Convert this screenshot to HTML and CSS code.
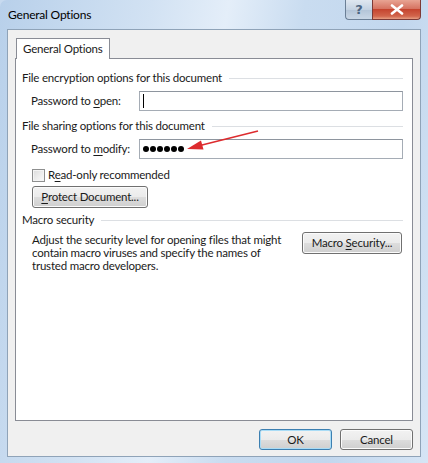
FILE: index.html
```html
<!DOCTYPE html>
<html lang="en">
<head>
    <meta charset="UTF-8">
    <title>General Options</title>
    <link rel="stylesheet" href="styles.css">
</head>
<body>
    <div class="window">
        <div class="titlebar">
            <span class="title">General Options</span>
            <div class="controls">
                <span class="ctl help">?</span>
                <span class="ctl close">
                    <svg width="14" height="11" viewBox="0 0 14 11"><path d="M2 1.5 L12 9.5 M12 1.5 L2 9.5" stroke="#fff" stroke-width="2.6" stroke-linecap="round"/></svg>
                </span>
            </div>
        </div>
        <div class="client">
            <div class="tabs">
                <div class="tab">General Options</div>
            </div>
            <div class="panel">
                <div class="group-title"><span>File encryption options for this document</span><i></i></div>
                <div class="row">
                    <label class="label">Password to <u>o</u>pen:</label>
                    <div class="field"><span class="caret"></span></div>
                </div>
                <div class="group-title g2"><span>File sharing options for this document</span><i></i></div>
                <div class="row">
                    <label class="label">Password to <u>m</u>odify:</label>
                    <div class="field dots"><b></b><b></b><b></b><b></b><b></b><b></b></div>
                </div>
                <div class="check-row">
                    <span class="checkbox"></span>
                    <span>R<u>e</u>ad-only recommended</span>
                </div>
                <button class="btn protect"><u>P</u>rotect Document...</button>
                <div class="group-title g3"><span>Macro security</span><i></i></div>
                <div class="macro">
                    <p>Adjust the security level for opening files that might contain macro viruses and specify the names of trusted macro developers.</p>
                    <button class="btn macro-btn">Macro <u>S</u>ecurity...</button>
                </div>
                <svg class="arrow" width="80" height="25" viewBox="0 0 80 25">
                    <line x1="74" y1="2" x2="16" y2="16.5" stroke="#dd2b2e" stroke-width="1.6"/>
                    <polygon points="3,20 19.5,20.5 17,11.5" fill="#dd2b2e"/>
                </svg>
            </div>
            <div class="footer">
                <button class="btn ok">OK</button>
                <button class="btn">Cancel</button>
            </div>
        </div>
    </div>
</body>
</html>
```

FILE: styles.css
```css
body,div,p{
    margin:0;
    padding:0;
}
body{
    background:#c7daef;
    font:11.5px/16px Lato, "Noto Sans", sans-serif;
    letter-spacing:-0.2px;
    color:#1a1a1a;
    white-space:nowrap;
}
u{
    text-decoration:underline;
    text-underline-offset:2px;
}
.window{
    width:428px;
    height:463px;
    box-sizing:border-box;
    padding:0 7px 6px 7px;
    border-radius:7px 7px 0 0;
    background:linear-gradient(100deg, #b8d0ea 0%, #d2e2f3 30%, #e4eef9 45%, #c9dcf0 60%, #c2d7ee 80%, #d6e5f5 100%);
    display:flex;
    flex-direction:column;
}
.titlebar{
    height:29px;
    display:flex;
    align-items:flex-start;
}
.title{
    margin:7px 0 0 1px;
    font-size:12px;
    color:#000;
}
.controls{
    margin-left:auto;
    display:flex;
}
.ctl{
    height:20px;
    display:flex;
    align-items:center;
    justify-content:center;
    border:1px solid #6b7f96;
    border-top:none;
    box-sizing:border-box;
}
.help{
    width:27px;
    border-radius:0 0 0 4px;
    border-right:none;
    background:linear-gradient(#dfe7f0, #c4d2e2 50%, #b3c4d7 51%, #c9d7e6);
    color:#4d6582;
    font:bold 13px/1 "DejaVu Sans", sans-serif;
}
.close{
    width:49px;
    border-color:#7d3a36;
    border-radius:0 0 4px 0;
    background:linear-gradient(#e8a493, #d67462 45%, #c5452f 50%, #d2654c 85%, #e79f83);
}
.client{
    flex:1;
    background:#f0f0f0;
    border:1px solid #8fa3b8;
    padding:8px 7px 6px 7px;
    display:flex;
    flex-direction:column;
}
.tabs{
    display:flex;
    padding-left:1px;
}
.tab{
    width:94px;
    box-sizing:border-box;
    height:21px;
    line-height:20px;
    padding:0 0 0 6px;
    border:1px solid #898c95;
    border-bottom:none;
    background:#fff;
    margin-bottom:-1px;
    position:relative;
    z-index:1;
}
.panel{
    flex:1;
    position:relative;
    background:#fff;
    border:1px solid #898c95;
    padding:11px 9px 0 6px;
}
.group-title{
    display:flex;
    align-items:center;
    height:16px;
}
.group-title i{
    flex:1;
    border-top:1px solid #dcdfe3;
    margin-left:7px;
}
.g2{
    margin-top:7px;
}
.g3{
    margin-top:4px;
}
.row{
    display:flex;
    align-items:center;
    margin-top:5px;
    padding-left:9px;
}
.label{
    width:108px;
}
.field{
    flex:1;
    height:20px;
    box-sizing:border-box;
    border:1px solid #a5acb5;
    border-top-color:#8e959e;
    display:flex;
    align-items:center;
    padding-left:3px;
}
.caret{
    width:1px;
    height:14px;
    background:#000;
}
.dots{
    gap:1px;
}
.dots b{
    width:6px;
    height:6px;
    border-radius:50%;
    background:#000;
}
.check-row{
    display:flex;
    align-items:center;
    margin-top:8px;
    padding-left:10px;
    height:16px;
}
.checkbox{
    width:13px;
    height:13px;
    box-sizing:border-box;
    border:1px solid #8e8f8f;
    background:linear-gradient(135deg, #dcdcdc, #fbfbfb);
    box-shadow:inset 0 0 0 1px #f4f4f4;
    margin-right:3px;
}
.btn{
    font:11.5px/16px Lato, "Noto Sans", sans-serif;
    letter-spacing:-0.2px;
    color:#1a1a1a;
    height:22px;
    padding:0 7px;
    white-space:nowrap;
    border:1px solid #707070;
    border-radius:3px;
    background:linear-gradient(#f2f2f2 0%, #ebebeb 50%, #dddddd 51%, #cfcfcf 100%);
    box-shadow:inset 0 0 0 1px #fbfbfb;
}
.protect{
    display:block;
    margin:3px 0 0 10px;
    width:116px;
}
.macro{
    display:flex;
    align-items:flex-start;
    margin-top:4px;
    padding-left:10px;
}
.macro p{
    width:262px;
    white-space:normal;
    line-height:13px;
    margin-top:1px;
}
.macro-btn{
    margin-left:auto;
    margin-right:1px;
    width:100px;
}
.arrow{
    position:absolute;
    left:168px;
    top:70px;
}
.footer{
    display:flex;
    justify-content:flex-end;
    gap:8px;
    margin-top:8px;
}
.footer .btn{
    width:73px;
    height:21px;
}
.footer .ok{
    border-color:#3c7fb1;
    box-shadow:inset 0 0 0 1px #a9dcf6;
}
```
